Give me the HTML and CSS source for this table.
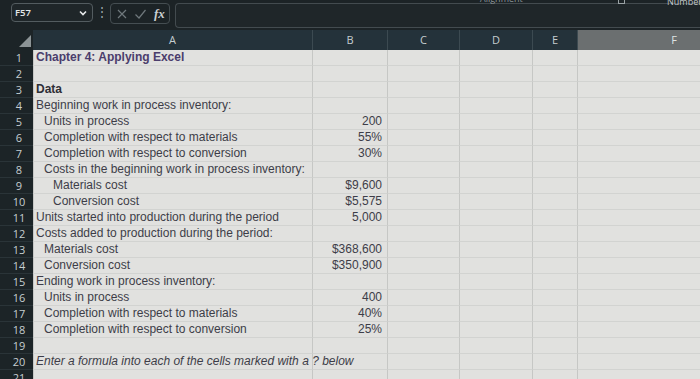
FILE: index.html
```html
<!DOCTYPE html>
<html>
<head>
<meta charset="utf-8">
<link rel="stylesheet" href="styles.css">
</head>
<body>
<div class="app">
  <div class="toolbar">
    <div class="namebox"><span class="ref">F57</span>
      <svg class="chev" width="8" height="6" viewBox="0 0 8 6"><path d="M1 1.5 L4 4.5 L7 1.5" fill="none" stroke="#e6eaeb" stroke-width="1.6"/></svg>
    </div>
    <div class="dots">⋮</div>
    <div class="fxbox">
      <svg width="12" height="12" viewBox="0 0 12 12"><path d="M2 2 L10 10 M10 2 L2 10" stroke="#6f787c" stroke-width="1.2"/></svg>
      <svg width="13" height="12" viewBox="0 0 13 12"><path d="M1.5 6.5 L5 10 L11.5 2" fill="none" stroke="#6f787c" stroke-width="1.2"/></svg>
      <span class="fx">fx</span>
    </div>
    <div class="formula"></div>
    <div class="ribbon-label align">Alignment</div>
    <div class="ribbon-icon"></div>
    <div class="ribbon-label number">Number</div>
  </div>
  <div class="sheet">
    <div class="corner"><span class="tri"></span></div>
    <div class="ch">A</div><div class="ch">B</div><div class="ch">C</div><div class="ch">D</div><div class="ch">E</div><div class="ch sel">F</div>

    <div class="rh">1</div><div class="c a title">Chapter 4: Applying Excel</div><div class="c"></div><div class="c"></div><div class="c"></div><div class="c"></div><div class="c"></div>
    <div class="rh">2</div><div class="c a"></div><div class="c"></div><div class="c"></div><div class="c"></div><div class="c"></div><div class="c"></div>
    <div class="rh">3</div><div class="c a bold">Data</div><div class="c"></div><div class="c"></div><div class="c"></div><div class="c"></div><div class="c"></div>
    <div class="rh">4</div><div class="c a">Beginning work in process inventory:</div><div class="c"></div><div class="c"></div><div class="c"></div><div class="c"></div><div class="c"></div>
    <div class="rh">5</div><div class="c a i1">Units in process</div><div class="c num">200</div><div class="c"></div><div class="c"></div><div class="c"></div><div class="c"></div>
    <div class="rh">6</div><div class="c a i1">Completion with respect to materials</div><div class="c num">55%</div><div class="c"></div><div class="c"></div><div class="c"></div><div class="c"></div>
    <div class="rh">7</div><div class="c a i1">Completion with respect to conversion</div><div class="c num">30%</div><div class="c"></div><div class="c"></div><div class="c"></div><div class="c"></div>
    <div class="rh">8</div><div class="c a i1">Costs in the beginning work in process inventory:</div><div class="c"></div><div class="c"></div><div class="c"></div><div class="c"></div><div class="c"></div>
    <div class="rh">9</div><div class="c a i2">Materials cost</div><div class="c num">$9,600</div><div class="c"></div><div class="c"></div><div class="c"></div><div class="c"></div>
    <div class="rh">10</div><div class="c a i2">Conversion cost</div><div class="c num">$5,575</div><div class="c"></div><div class="c"></div><div class="c"></div><div class="c"></div>
    <div class="rh">11</div><div class="c a">Units started into production during the period</div><div class="c num">5,000</div><div class="c"></div><div class="c"></div><div class="c"></div><div class="c"></div>
    <div class="rh">12</div><div class="c a">Costs added to production during the period:</div><div class="c"></div><div class="c"></div><div class="c"></div><div class="c"></div><div class="c"></div>
    <div class="rh">13</div><div class="c a i1">Materials cost</div><div class="c num">$368,600</div><div class="c"></div><div class="c"></div><div class="c"></div><div class="c"></div>
    <div class="rh">14</div><div class="c a i1">Conversion cost</div><div class="c num">$350,900</div><div class="c"></div><div class="c"></div><div class="c"></div><div class="c"></div>
    <div class="rh">15</div><div class="c a">Ending work in process inventory:</div><div class="c"></div><div class="c"></div><div class="c"></div><div class="c"></div><div class="c"></div>
    <div class="rh">16</div><div class="c a i1">Units in process</div><div class="c num">400</div><div class="c"></div><div class="c"></div><div class="c"></div><div class="c"></div>
    <div class="rh">17</div><div class="c a i1">Completion with respect to materials</div><div class="c num">40%</div><div class="c"></div><div class="c"></div><div class="c"></div><div class="c"></div>
    <div class="rh">18</div><div class="c a i1">Completion with respect to conversion</div><div class="c num">25%</div><div class="c"></div><div class="c"></div><div class="c"></div><div class="c"></div>
    <div class="rh">19</div><div class="c a"></div><div class="c"></div><div class="c"></div><div class="c"></div><div class="c"></div><div class="c"></div>
    <div class="rh">20</div><div class="c a ital over">Enter a formula into each of the cells marked with a ? below</div><div class="c nob"></div><div class="c"></div><div class="c"></div><div class="c"></div><div class="c"></div>
    <div class="rh">21</div><div class="c a"></div><div class="c"></div><div class="c"></div><div class="c"></div><div class="c"></div><div class="c"></div>
  </div>
</div>
</body>
</html>
```

FILE: styles.css
```css
html, body {
  margin: 0;
  padding: 0;
  background: #1b2225;
  overflow: hidden;
}
.app {
  width: 700px;
  height: 379px;
  overflow: hidden;
  background: #1b2225;
  font-family: "Liberation Sans", Arial, sans-serif;
}
.toolbar {
  position: relative;
  height: 30px;
  display: flex;
  align-items: flex-start;
  padding: 3px 0 0 11px;
  box-sizing: border-box;
  background: #1c2326;
}
.namebox {
  width: 82px;
  height: 19px;
  box-sizing: border-box;
  border: 1px solid #535c60;
  border-radius: 4px;
  background: #1f2629;
  display: flex;
  align-items: center;
  justify-content: space-between;
  padding: 0 5px 0 3px;
  color: #e4e8e9;
  font-family: "Open Sans", sans-serif;
  font-size: 9.5px;
  font-weight: 600;
}
.dots {
  width: 17px;
  text-align: center;
  color: #a6adb0;
  font-size: 12px;
  line-height: 19px;
}
.fxbox {
  width: 60px;
  height: 21px;
  box-sizing: border-box;
  border: 1px solid #454e52;
  border-radius: 4px;
  display: flex;
  align-items: center;
  gap: 6px;
  padding-left: 5px;
}
.fx {
  font-family: "Liberation Serif", serif;
  font-style: italic;
  font-weight: bold;
  color: #c9cfd1;
  font-size: 13px;
  margin-left: 1px;
}
.formula {
  flex: 1;
  height: 23px;
  margin-left: 5px;
  border: 1px solid #434b4f;
  border-right: none;
  border-radius: 4px 0 0 4px;
  background: #1f2629;
}
.ribbon-label {
  position: absolute;
  top: -3px;
  color: #c3c9cc;
  font-family: "Open Sans", sans-serif;
  font-size: 9px;
  line-height: 10px;
}
.ribbon-label.align { left: 480px; top: -6px; color: #8e9699; }
.ribbon-label.number { left: 667px; }
.ribbon-icon {
  position: absolute;
  left: 618px;
  top: -3px;
  width: 5px;
  height: 5px;
  border: 1px solid #9aa2a5;
}
.sheet {
  display: grid;
  grid-template-columns: 33px 280px 75px 72px 73px 45px 192px;
  grid-template-rows: 20px repeat(21, 16px);
  background: #e1e1df;
}
.corner {
  background: #1c2427;
  position: relative;
}
.tri {
  position: absolute;
  right: 2px;
  bottom: 3px;
  width: 0;
  height: 0;
  border-left: 12px solid transparent;
  border-bottom: 12px solid #8c9496;
}
.ch {
  background: #24323a;
  color: #c5cdd0;
  font-family: "Open Sans", sans-serif;
  font-size: 11px;
  text-align: center;
  line-height: 20px;
  border-right: 1px solid #3c4a51;
}
.ch.sel {
  background: #6b6f70;
  color: #dfe3e3;
  border-right: none;
}
.rh {
  background: #1c2427;
  color: #c6ced1;
  font-family: "Open Sans", sans-serif;
  font-size: 11px;
  line-height: 16px;
  text-align: center;
  padding-left: 5px;
  border-bottom: 1px solid #2a3438;
  box-sizing: border-box;
}
.c {
  box-sizing: border-box;
  border-right: 1px solid #c6c7c5;
  border-bottom: 1px solid #d2d3d1;
  font-size: 12px;
  line-height: 15px;
  color: #3d3d48;
  white-space: nowrap;
  overflow: visible;
  position: relative;
  z-index: 1;
}
.a {
  padding-left: 2px;
  border-left: 1px solid #c6c7c5;
}
.i1 { padding-left: 10px; }
.i2 { padding-left: 19px; }
.title {
  font-weight: bold;
  color: #4b3d6c;
}
.bold {
  font-weight: bold;
  color: #2e2e36;
}
.ital { font-style: italic; }
.over { z-index: 2; }
.nob { z-index: 0; }
.num {
  text-align: right;
  padding-right: 5px;
}
```
